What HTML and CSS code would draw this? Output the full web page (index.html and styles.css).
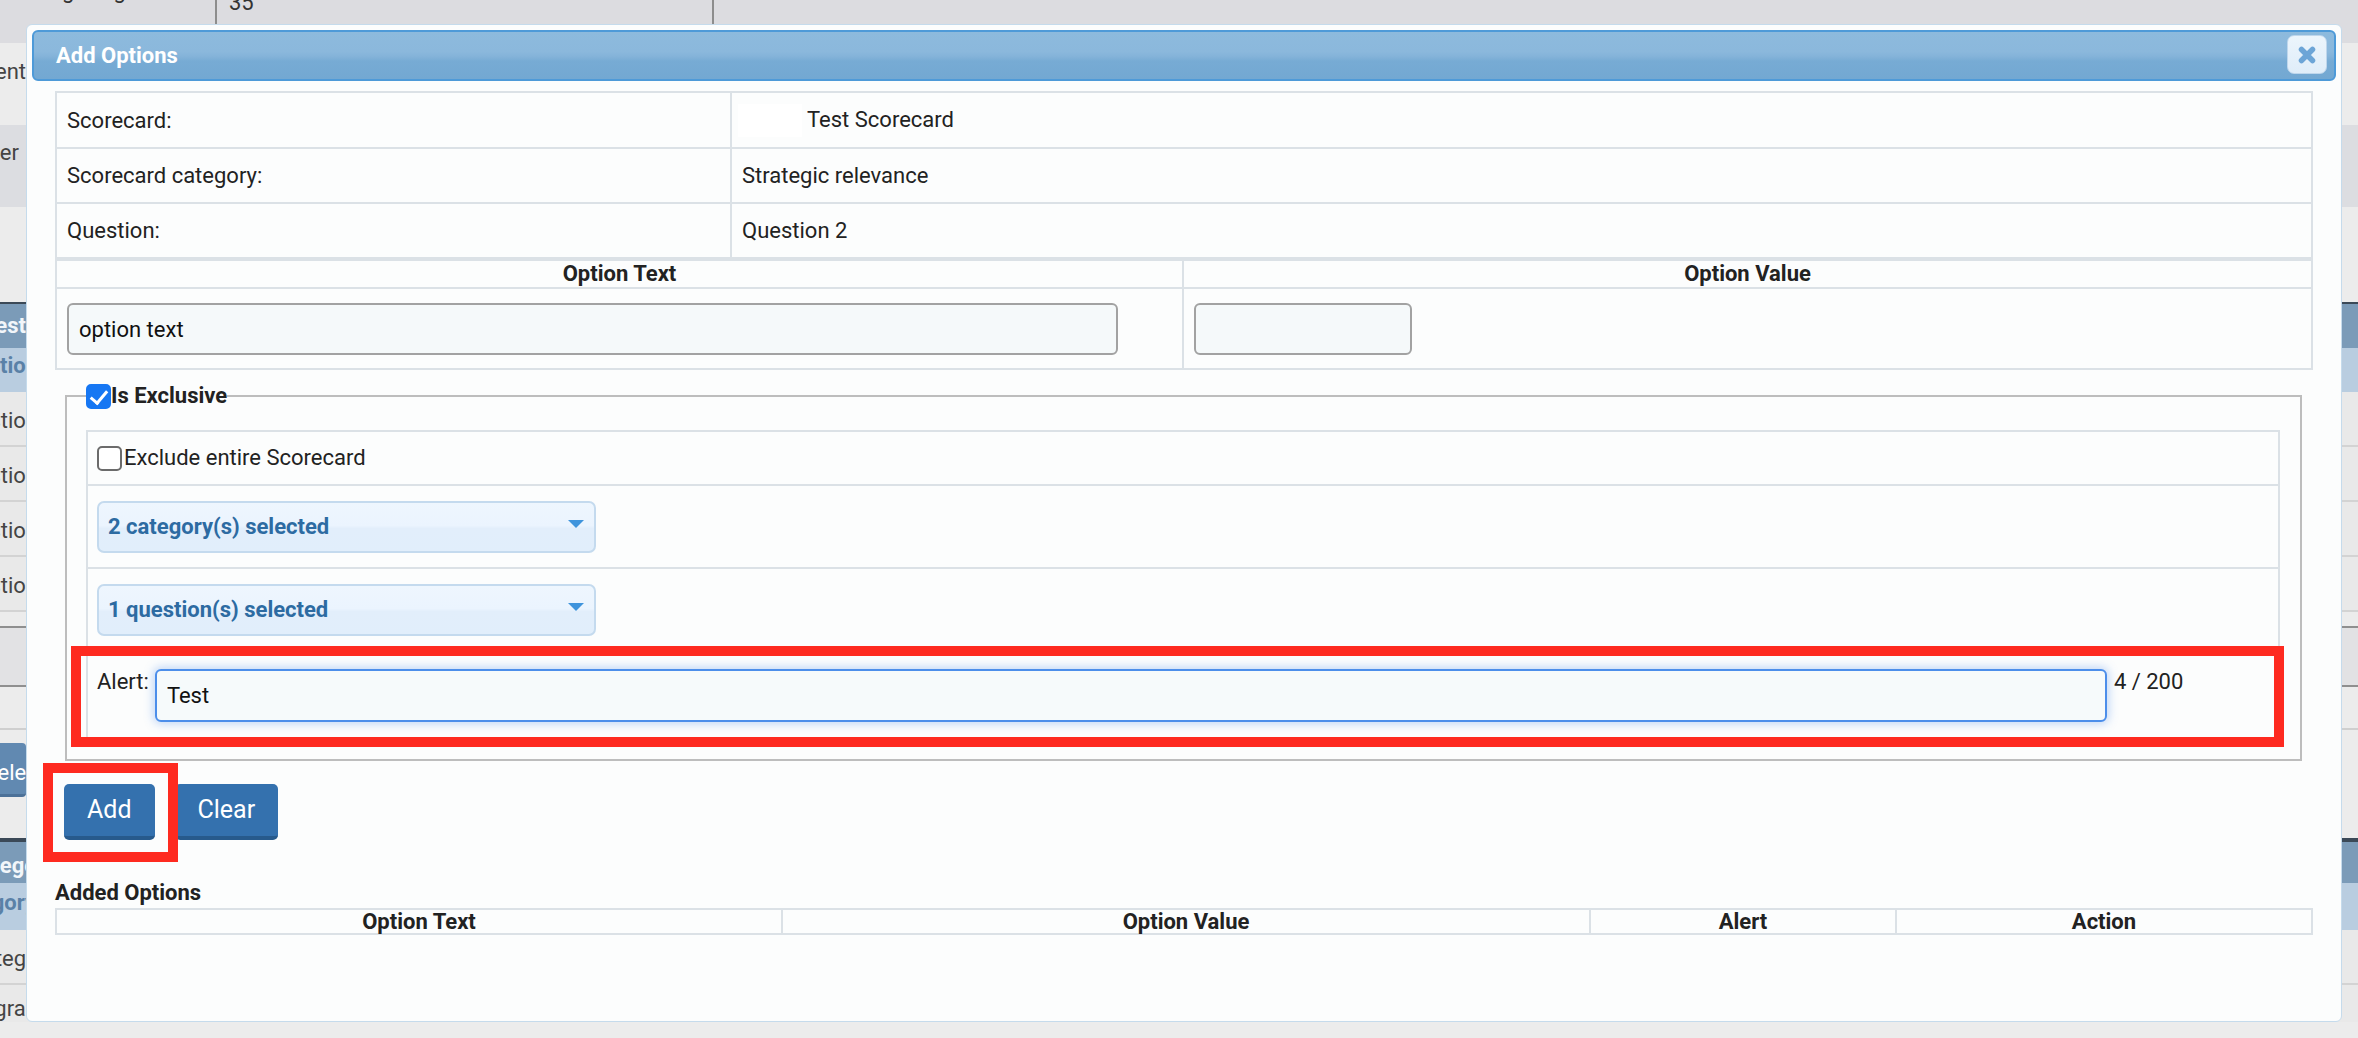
FILE: index.html
```html
<!DOCTYPE html>
<html lang="en">
<head>
<meta charset="utf-8">
<title>Add Options</title>
<link rel="stylesheet" href="styles.css">
</head>
<body>
<div class="page">
  <div class="bg-row row-top">
    <div class="top-c1"><span class="up-far">Scoring weight</span></div>
    <div class="top-c2"><span class="up-near">35</span></div>
    <div class="grow"></div>
  </div>
  <div class="bg-row light h82 p16"><div class="lead"><span>Assessment</span></div></div>
  <div class="bg-row grey h82 p15"><div class="lead"><span class="pr7">Owner</span></div></div>
  <div class="bg-row light h95"></div>
  <div class="bg-row head h46 p9"><div class="lead"><span>Test</span></div></div>
  <div class="bg-row sub h44 p5"><div class="lead"><span class="cut12">Question</span></div></div>
  <div class="bg-row cellrow h55 p16"><div class="lead"><span class="cut12">Question</span></div></div>
  <div class="bg-row cellrow h55 p16"><div class="lead"><span class="cut12">Question</span></div></div>
  <div class="bg-row cellrow h55 p16"><div class="lead"><span class="cut12">Question</span></div></div>
  <div class="bg-row cellrow h55 p16"><div class="lead"><span class="cut12">Question</span></div></div>
  <div class="bg-row light h16 darkline"></div>
  <div class="bg-row mid h59 darkline"></div>
  <div class="bg-row light h43 softline"></div>
  <div class="bg-row light h13"></div>
  <div class="bg-row light h54"><div class="lead btnlead"><span class="cut19">Select</span></div></div>
  <div class="bg-row light h43 headline"></div>
  <div class="bg-row head h43 p11"><div class="lead"><span class="cut30">Category</span></div></div>
  <div class="bg-row sub h47 p7"><div class="lead"><span class="cut10">Category</span></div></div>
  <div class="bg-row cellrow h55 p16"><div class="lead"><span class="cut17">Strategic</span></div></div>
  <div class="bg-row cellrow last">
    <div class="lead p11"><span class="cut19">Program</span></div>
    <div class="bc b1"></div>
    <div class="bc b2"></div>
    <div class="bc b3"></div>
    <div class="bc b4"></div>
    <div class="bc b5"></div>
    <div class="bc b6"></div>
    <div class="grow"></div>
  </div>
</div>

<div class="dialog">
  <div class="titlebar">
    <span class="title">Add Options</span>
    <button class="close" type="button" aria-label="close">
      <svg width="22" height="20" viewBox="0 0 22 20"><path d="M5.5 4.5 L16.5 15.5 M16.5 4.5 L5.5 15.5" stroke="#6ca5d7" stroke-width="5.5" stroke-linecap="round" fill="none"/></svg>
    </button>
  </div>
  <div class="content">
    <table class="grid info">
      <tr><td class="k">Scorecard:</td><td><span class="logo-slot"></span> Test Scorecard</td></tr>
      <tr><td class="k">Scorecard category:</td><td>Strategic relevance</td></tr>
      <tr><td class="k">Question:</td><td>Question 2</td></tr>
    </table>
    <table class="grid opt">
      <tr><th class="half">Option Text</th><th>Option Value</th></tr>
      <tr>
        <td><input class="txt wide" type="text" value="option text"></td>
        <td><input class="txt narrow" type="text" value=""></td>
      </tr>
    </table>
    <fieldset class="excl">
      <legend><input class="cb" type="checkbox" checked>Is Exclusive</legend>
      <table class="grid inner">
        <tr><td class="r1"><label class="chk"><input class="cb" type="checkbox">Exclude entire Scorecard</label></td></tr>
        <tr><td class="r2"><div class="ms"><span>2 category(s) selected</span><span class="caret"></span></div></td></tr>
        <tr><td class="r2"><div class="ms"><span>1 question(s) selected</span><span class="caret"></span></div></td></tr>
        <tr><td class="r4"><div class="alert-row"><span>Alert:</span><input class="txt alert" type="text" value="Test"><span>4 / 200</span></div></td></tr>
      </table>
    </fieldset>
    <div class="btns">
      <button class="btn" type="button">Add</button>
      <button class="btn" type="button">Clear</button>
    </div>
    <div class="added-title">Added Options</div>
    <table class="grid added">
      <tr><th class="c1">Option Text</th><th class="c2">Option Value</th><th class="c3">Alert</th><th>Action</th></tr>
    </table>
  </div>
</div>

<div class="mark mark-alert"></div>
<div class="mark mark-add"></div>
</body>
</html>
```

FILE: styles.css
```css
* { box-sizing: border-box; }
html, body { margin: 0; padding: 0; }
body {
  position: relative;
  width: 2358px;
  height: 1038px;
  overflow: hidden;
  font-family: Roboto, "Liberation Sans", sans-serif;
  font-size: 22px;
  line-height: 26px;
  color: #222;
  background: #ececec;
}

/* ---------- background page ---------- */
.page { display: flex; flex-direction: column; width: 100%; }
.bg-row { display: flex; flex: none; overflow: hidden; background: #ececec; }
.lead {
  flex: none;
  width: 26px;
  display: flex;
  justify-content: flex-end;
  overflow: hidden;
  white-space: nowrap;
  color: #444;
}
.grow { flex: 1; }
.light { background: #ececec; }
.grey { background: #dcdde1; }
.mid { background: #e2e2e4; }
.head { background: #7b9bb8; border-top: 2px solid #3b4957; }
.head .lead { color: #f2f6fa; font-weight: 700; }
.sub { background: #b9cde0; }
.sub .lead { color: #5a81a7; font-weight: 700; }
.cellrow { background: #e9e9e9; border-bottom: 2px solid #d3d3d3; }
.darkline { border-bottom: 2px solid #8f8f8f; }
.softline { border-bottom: 2px solid #cfcfcf; }
.headline { border-bottom: 2px solid #3b4957; }
.btnlead { background: #6189b1; color: #fff; padding-top: 17px; border-bottom: 3px solid #4c7198; border-radius: 0 4px 4px 0; }

.h13 { height: 13px; } .h16 { height: 16px; } .h43 { height: 43px; } .h44 { height: 44px; }
.h46 { height: 46px; } .h47 { height: 47px; } .h54 { height: 54px; } .h55 { height: 55px; }
.h59 { height: 59px; } .h82 { height: 82px; } .h95 { height: 95px; }
.p5 { padding-top: 5px; } .p7 { padding-top: 7px; } .p9 { padding-top: 9px; } .p11 { padding-top: 11px; }
.p15 { padding-top: 15px; } .p16 { padding-top: 16px; }
.pr7 { padding-right: 7px; }
.cut10 { margin-right: -10px; } .cut12 { margin-right: -12px; }
.cut17 { margin-right: -17px; } .cut19 { margin-right: -19px; } .cut30 { margin-right: -30px; }

.row-top { height: 43px; background: #dcdce0; }
.top-c1 { width: 217px; border-right: 2px solid #8d8d8d; overflow: hidden; white-space: nowrap; color: #333; }
.top-c2 { width: 497px; border-right: 2px solid #8d8d8d; padding-left: 12px; color: #333; }
.up-far { display: block; margin-top: -22px; }
.up-near { display: block; margin-top: -10px; }

.last { flex: 1; border-bottom: none; }
.bc { border-right: 2px solid #c9c9c9; }
.b1 { width: 465px; } .b2 { width: 198px; } .b3 { width: 916px; }
.b4 { width: 222px; } .b5 { width: 198px; } .b6 { width: 198px; }

/* ---------- dialog ---------- */
.dialog {
  position: absolute;
  left: 26px;
  top: 24px;
  width: 2316px;
  height: 998px;
  z-index: 2;
  background: #fcfdfd;
  border: 1px solid #c5dbec;
  border-radius: 6px;
  padding: 5px;
}
.titlebar {
  display: flex;
  align-items: center;
  height: 51px;
  border: 2px solid #4e9ad8;
  border-radius: 6px;
  padding: 0 7px 0 22px;
  background: linear-gradient(to bottom, #8dbadd 0%, #8bb8dc 42%, #84b3d9 52%, #77abd4 62%, #73a8d2 100%);
}
.title { flex: 1; color: #fff; font-weight: 700; }
.close {
  width: 40px;
  height: 39px;
  padding: 0;
  margin-top: -2px;
  display: flex;
  align-items: center;
  justify-content: center;
  border: 1px solid #bed6ec;
  border-radius: 7px;
  background: linear-gradient(to bottom, #ecf5fc, #dfedf9);
}

.content { padding: 10px 23px 0; }

table { border-spacing: 0; table-layout: fixed; width: 100%; }
.grid { border-top: 2px solid #dbe1e6; border-left: 2px solid #dbe1e6; }
.grid td, .grid th { border-right: 2px solid #dbe1e6; border-bottom: 2px solid #dbe1e6; }
th { font-weight: 700; text-align: center; padding: 0; }

.info td { height: 55px; padding: 14px 10px 13px; line-height: 26px; vertical-align: middle; color: #222; }
.info td.k { width: 675px; }
.logo-slot {
  display: inline-block;
  width: 64px;
  height: 33px;
  margin: -4px 0 -3px -4px;
  background: #fff;
  vertical-align: middle;
}

.opt th { line-height: 26px; }
.opt th.half { width: 1127px; }
.opt td { padding: 14px 10px 13px; }

.txt {
  display: block;
  height: 52px;
  border: 2px solid #a2a2a2;
  border-radius: 6px;
  background: #f5f9fa;
  font: inherit;
  color: #111;
  padding: 0 10px;
  outline: none;
}
.wide { width: 1051px; }
.narrow { width: 218px; }

.excl {
  margin: 13px 11px 0 10px;
  border: 2px solid #bdbdbd;
  padding: 21px 20px 19px 19px;
  min-width: 0;
}
.excl legend {
  display: flex;
  align-items: center;
  padding: 0;
  font-weight: 700;
  line-height: 26px;
  color: #222;
}

.cb {
  -webkit-appearance: none;
  appearance: none;
  position: relative;
  flex: none;
  margin: 0;
  width: 25px;
  height: 25px;
  border: 2px solid #6b6b6b;
  border-radius: 5px;
  background: #fff;
}
.cb:checked { background: #1677f3; border-color: #1677f3; }
.cb:checked::after {
  content: "";
  position: absolute;
  left: 6px;
  top: 1px;
  width: 7px;
  height: 14px;
  border-right: 3.5px solid #fff;
  border-bottom: 3.5px solid #fff;
  transform: rotate(40deg);
}

.inner td { padding-left: 9px; padding-right: 9px; }
.inner td.r1 { padding-top: 13px; padding-bottom: 13px; }
.inner td.r2 { padding-top: 15px; padding-bottom: 14px; }
.inner td.r4 { padding-top: 17px; padding-bottom: 16px; }
.chk { display: flex; align-items: center; gap: 2px; color: #222; }

.ms {
  display: flex;
  align-items: center;
  justify-content: space-between;
  width: 499px;
  height: 52px;
  padding: 0 10px 0 9px;
  border: 2px solid #c4daee;
  border-radius: 7px;
  background: linear-gradient(to bottom, #eef6fe 0%, #ebf4fe 47%, #e2eefb 53%, #e1eefb 100%);
  color: #2d6ba2;
  font-weight: 700;
}
.caret {
  width: 0;
  height: 0;
  margin-top: -6px;
  border-left: 8px solid transparent;
  border-right: 8px solid transparent;
  border-top: 8px solid #3f94dc;
}

.alert-row { display: flex; align-items: flex-start; color: #222; }
.alert-row .txt.alert {
  width: 1952px;
  height: 53px;
  margin: 0 7px 0 6px;
  border-color: #4c8eea;
  background: #f6fafb;
  box-shadow: 0 0 10px 2px rgba(84, 142, 236, 0.35);
}

.btns { display: flex; gap: 20px; margin-top: 23px; padding-left: 9px; }
.btn {
  height: 56px;
  padding: 0 23px;
  border: none;
  border-bottom: 4px solid #275a8c;
  border-radius: 5px;
  background: #3471ae;
  color: #fff;
  font-family: Roboto, "Liberation Sans", sans-serif;
  font-size: 25px;
  line-height: 52px;
}

.added-title { margin-top: 40px; font-weight: 700; line-height: 26px; color: #222; }
.added { margin-top: 2px; }
.added th { line-height: 23px; color: #222; }
.added th.c1 { width: 726px; }
.added th.c2 { width: 808px; }
.added th.c3 { width: 306px; }

/* ---------- annotation marks ---------- */
.mark { position: absolute; z-index: 3; border: 10px solid #fe2a20; }
.mark-alert { left: 71px; top: 646px; width: 2213px; height: 101px; }
.mark-add { left: 43px; top: 763px; width: 135px; height: 99px; }
```
